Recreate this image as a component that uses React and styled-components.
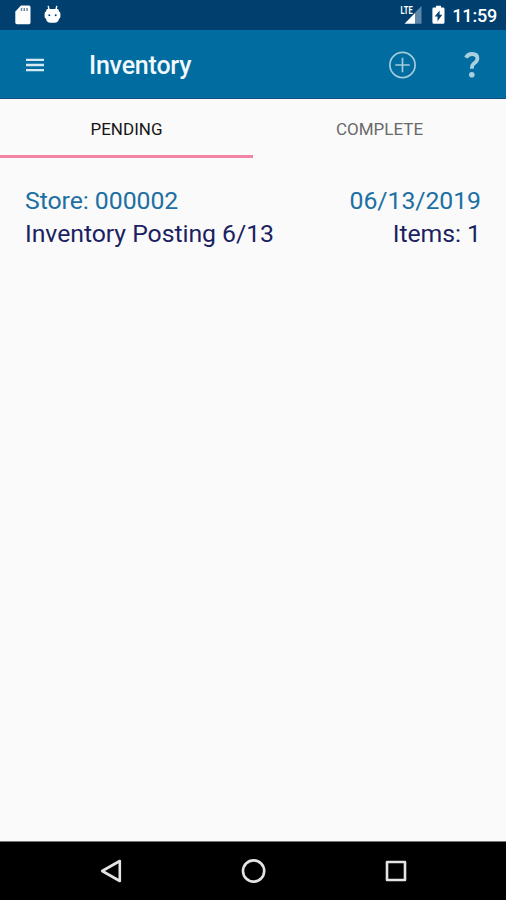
import React from "react";
import styled, { createGlobalStyle } from "styled-components";

const records = [
  {
    id: 1,
    store: "Store: 000002",
    date: "06/13/2019",
    title: "Inventory Posting 6/13",
    items: "Items: 1",
  },
];

const App = () => {
  return (
    <>
      <GlobalStyle />
      <Screen>
        <StatusBar>
          <StatusGroup>
            <SdCardIcon />
            <AndroidIcon />
          </StatusGroup>
          <StatusGroup>
            <SignalIcon />
            <BatteryIcon />
            <Clock>11:59</Clock>
          </StatusGroup>
        </StatusBar>
        <Toolbar>
          <IconButton aria-label="Menu">
            <MenuIcon />
          </IconButton>
          <Title>Inventory</Title>
          <IconButton aria-label="Add">
            <AddIcon />
          </IconButton>
          <HelpButton aria-label="Help">
            <HelpIcon />
          </HelpButton>
        </Toolbar>
        <Tabs>
          <Tab $active>PENDING</Tab>
          <Tab>COMPLETE</Tab>
        </Tabs>
        <List>
          {records.map((record) => (
            <Record key={record.id}>
              <Line color="#206fa3">
                <span>{record.store}</span>
                <span>{record.date}</span>
              </Line>
              <Line color="#1c1f62">
                <span>{record.title}</span>
                <span>{record.items}</span>
              </Line>
            </Record>
          ))}
        </List>
        <NavBar>
          <NavButton aria-label="Back">
            <svg width="24" height="26" viewBox="0 0 24 26">
              <path d="M20.8 3V23L3.2 13Z" />
            </svg>
          </NavButton>
          <NavButton aria-label="Home">
            <svg width="26" height="26" viewBox="0 0 26 26">
              <circle cx="12.6" cy="13" r="10.6" />
            </svg>
          </NavButton>
          <NavButton aria-label="Recents">
            <svg width="24" height="26" viewBox="0 0 24 26">
              <rect x="3" y="4" width="18" height="18" />
            </svg>
          </NavButton>
        </NavBar>
      </Screen>
    </>
  );
};

const SdCardIcon = () => (
  <svg width="16" height="20" viewBox="0 0 16 20">
    <path
      d="M6 0.5H14Q15.5 0.5 15.5 2V17.5Q15.5 19.3 14 19.3H2Q0.3 19.3 0.3 17.5V6.5Z"
      fill="#fff"
    />
    <path d="M6.5 3V6M9.3 3V6M12.1 3V6" stroke="#6f86a3" strokeWidth="1.5" />
  </svg>
);

const AndroidIcon = () => (
  <svg width="17" height="20" viewBox="0 0 17 20">
    <path d="M4.2 0.8L5 4.5M12.8 0.8L12 4.5" stroke="#fff" strokeWidth="1.4" />
    <path
      d="M3 4H14Q15 5 15 6.5Q16.4 7 16.4 8.8V11.6Q16.4 13.4 15 13.8Q14.4 17.8 10.5 17.8H6.5Q2.6 17.8 2 13.8Q0.6 13.4 0.6 11.6V8.8Q0.6 7 2 6.5Q2 5 3 4Z"
      fill="#fff"
    />
    <circle cx="5.3" cy="10.3" r="1" fill="#08406e" />
    <circle cx="11.7" cy="10.3" r="1" fill="#08406e" />
  </svg>
);

const SignalIcon = () => (
  <svg width="22" height="20" viewBox="0 0 22 20">
    <path d="M21.5 1V18.8H15V7.5Z" fill="#5e88aa" />
    <path d="M15 8V18.8H4.5Z" fill="#fff" />
    <text
      x="0.6"
      y="8.8"
      fill="#fff"
      fontFamily="Roboto, sans-serif"
      fontSize="10"
      fontWeight="700"
      textLength="12"
      lengthAdjust="spacingAndGlyphs"
    >
      LTE
    </text>
  </svg>
);

const BatteryIcon = () => (
  <svg width="13" height="20" viewBox="0 0 13 20">
    <path
      d="M4 0.8H9V2.6H11.2Q12.5 2.6 12.5 4V17.2Q12.5 18.8 11.2 18.8H1.8Q0.4 18.8 0.4 17.2V4Q0.4 2.6 1.8 2.6H4Z"
      fill="#fff"
    />
    <path d="M7.6 5.5L2.7 11.5H5.5V16.2L10.3 9.8H7.6Z" fill="#08406e" />
  </svg>
);

const MenuIcon = () => (
  <svg width="18" height="14" viewBox="0 0 18 14">
    <path d="M0 1.9H18M0 7H18M0 12.1H18" stroke="#d6e9f3" strokeWidth="2.3" />
  </svg>
);

const AddIcon = () => (
  <svg width="28" height="28" viewBox="0 0 28 28">
    <g fill="none" stroke="#a3cbdc" strokeWidth="1.7">
      <circle cx="14.5" cy="14" r="12.6" />
      <path d="M14.5 6.8V21.2M7.3 14H21.7" />
    </g>
  </svg>
);

const HelpIcon = () => (
  <svg width="16" height="28" viewBox="0 0 16 28">
    <path
      d="M2 6.7Q3.6 3 8 3Q13.4 3 13.4 7.4Q13.4 10 10.5 12Q7.8 13.7 7.8 17.7"
      fill="none"
      stroke="#a9cfe0"
      strokeWidth="3.8"
    />
    <circle cx="7.8" cy="23.8" r="2.8" fill="#a9cfe0" />
  </svg>
);

const GlobalStyle = createGlobalStyle`
  body {
    margin: 0;
    font-family: Roboto, sans-serif;
  }
`;

const Screen = styled.div`
  display: flex;
  flex-direction: column;
  height: 100vh;
  background: #fafafa;
`;

const StatusBar = styled.div`
  display: flex;
  justify-content: space-between;
  box-sizing: border-box;
  height: 30px;
  padding: 5px 9px 0 15px;
  background: #013f6f;
`;

const StatusGroup = styled.div`
  display: flex;
  gap: 10px;

  svg:nth-child(2) {
    margin-left: 3px;
  }

  &:last-child svg:nth-child(2) {
    margin-left: 0;
  }
`;

const Clock = styled.span`
  margin-left: -3px;
  color: #fff;
  font-size: 18px;
  font-weight: 500;
  line-height: 22px;
  letter-spacing: -0.2px;
`;

const Toolbar = styled.header`
  display: flex;
  align-items: center;
  box-sizing: border-box;
  height: 69px;
  padding: 1px 26px 0;
  background: #006c9f;
  border-bottom: 1px solid #105087;
`;

const IconButton = styled.button`
  display: flex;
  padding: 0;
  background: none;
  border: none;
`;

const HelpButton = styled(IconButton)`
  margin: 0 0 0 48px;
`;

const Title = styled.h1`
  flex: 1;
  margin: 2px 0 0 45px;
  color: #f2f8fc;
  font-size: 25px;
  font-weight: 500;
  letter-spacing: -0.2px;
`;

const Tabs = styled.div`
  display: flex;
  height: 59px;
`;

const Tab = styled.div`
  flex: 1;
  box-sizing: border-box;
  padding-top: 20px;
  border-bottom: 3px solid ${(props) => (props.$active ? "#f284a6" : "transparent")};
  color: ${(props) => (props.$active ? "#161616" : "#696969")};
  font-size: 17px;
  line-height: 20px;
  text-align: center;
`;

const List = styled.main`
  flex: 1;
  padding: 26px 25px 0;
`;

const Record = styled.div`
  display: flex;
  flex-direction: column;
`;

const Line = styled.div`
  display: flex;
  justify-content: space-between;
  color: ${(props) => props.color};
  font-size: 24.8px;
  line-height: 33px;
  letter-spacing: -0.05px;
`;

const NavBar = styled.nav`
  display: flex;
  justify-content: space-between;
  align-items: center;
  box-sizing: border-box;
  height: 59px;
  padding: 0 98px 0 99px;
  background: #000;
  border-top: 1px solid #777;
`;

const NavButton = styled(IconButton)`
  svg {
    fill: none;
    stroke: #e4e4e4;
    stroke-width: 2.6;
    stroke-linejoin: round;
  }
`;

export default App;
